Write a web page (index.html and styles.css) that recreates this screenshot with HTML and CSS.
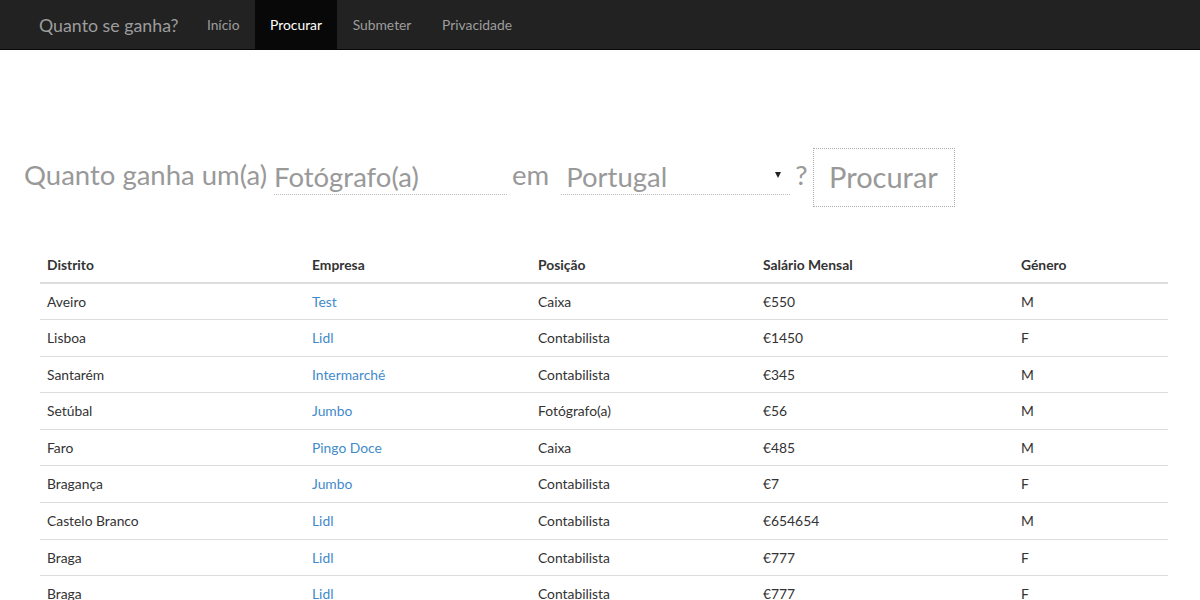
FILE: index.html
```html
<!DOCTYPE html>
<html lang="pt">
<head>
<meta charset="utf-8">
<title>Quanto se ganha?</title>
<link rel="stylesheet" href="styles.css">
</head>
<body>
<nav class="navbar">
  <a class="brand" href="#">Quanto se ganha?</a>
  <ul class="nav">
    <li><a href="#">Início</a></li>
    <li class="active"><a href="#">Procurar</a></li>
    <li><a href="#">Submeter</a></li>
    <li><a href="#">Privacidade</a></li>
  </ul>
</nav>
<main class="page">
  <form class="search">
    <span class="label">Quanto ganha um(a)</span>
    <input class="field job" type="text" placeholder="Fotógrafo(a)">
    <span class="label em">em</span>
    <div class="field select">
      <span>Portugal</span>
      <span class="caret"></span>
    </div>
    <span class="label q">?</span>
    <button class="btn" type="button">Procurar</button>
  </form>
  <table class="results">
    <thead>
      <tr><th class="c1">Distrito</th><th class="c2">Empresa</th><th class="c3">Posição</th><th class="c4">Salário Mensal</th><th class="c5">Género</th></tr>
    </thead>
    <tbody>
      <tr><td>Aveiro</td><td><a href="#">Test</a></td><td>Caixa</td><td>€550</td><td>M</td></tr>
      <tr><td>Lisboa</td><td><a href="#">Lidl</a></td><td>Contabilista</td><td>€1450</td><td>F</td></tr>
      <tr><td>Santarém</td><td><a href="#">Intermarché</a></td><td>Contabilista</td><td>€345</td><td>M</td></tr>
      <tr><td>Setúbal</td><td><a href="#">Jumbo</a></td><td>Fotógrafo(a)</td><td>€56</td><td>M</td></tr>
      <tr><td>Faro</td><td><a href="#">Pingo Doce</a></td><td>Caixa</td><td>€485</td><td>M</td></tr>
      <tr><td>Bragança</td><td><a href="#">Jumbo</a></td><td>Contabilista</td><td>€7</td><td>F</td></tr>
      <tr><td>Castelo Branco</td><td><a href="#">Lidl</a></td><td>Contabilista</td><td>€654654</td><td>M</td></tr>
      <tr><td>Braga</td><td><a href="#">Lidl</a></td><td>Contabilista</td><td>€777</td><td>F</td></tr>
      <tr><td>Braga</td><td><a href="#">Lidl</a></td><td>Contabilista</td><td>€777</td><td>F</td></tr>
    </tbody>
  </table>
</main>
</body>
</html>
```

FILE: styles.css
```css
* { box-sizing: border-box; }
html, body { margin: 0; padding: 0; }
body {
  font-family: Lato, "Open Sans", "Liberation Sans", sans-serif;
  font-size: 13.85px;
  color: #333;
  background: #fff;
  overflow: hidden;
}
a { text-decoration: none; }

.navbar {
  display: flex;
  align-items: stretch;
  height: 50px;
  background: #222;
  border-bottom: 1px solid #080808;
  padding-left: 24px;
}
.brand {
  display: flex;
  align-items: center;
  padding: 0 13px 0 15px;
  font-size: 17.8px;
  color: #9d9d9d;
}
.nav {
  display: flex;
  list-style: none;
  margin: 0;
  padding: 0;
}
.nav li a {
  display: flex;
  align-items: center;
  height: 100%;
  padding: 0 15.3px;
  color: #9d9d9d;
}
.nav li.active a {
  background: #080808;
  color: #fff;
}

.search {
  display: flex;
  align-items: center;
  margin: 98px 0 0 24px;
  height: 59px;
  color: #999;
}
.label {
  font-size: 27.5px;
  font-weight: 400;
  color: #999;
  line-height: 1;
  position: relative;
  top: -3px;
}
.em { margin-left: 5px; margin-right: 12px; }
.q { margin-left: 5px; margin-right: 5px; }
.field {
  font-family: inherit;
  font-size: 27.5px;
  color: #999;
  border: 0;
  border-bottom: 1px dotted #bbb;
  background: transparent;
  height: 34px;
  padding: 0 0 3px 0;
  margin-top: 1px;
  outline: none;
}
.field::placeholder { color: #999; }
.job { width: 233px; margin-left: 7px; }
.select {
  display: flex;
  align-items: center;
  justify-content: space-between;
  width: 229px;
  padding: 0 0 3px 5px;
}
.caret {
  width: 0; height: 0;
  border-left: 3px solid transparent;
  border-right: 3px solid transparent;
  border-top: 6px solid #222;
  margin-right: 9px;
  margin-top: -2px;
}
.btn {
  font-family: inherit;
  font-size: 29px;
  color: #999;
  background: #fff;
  border: 1px dotted #aaa;
  width: 142px;
  height: 59px;
  padding: 0 0 2px 0;
  line-height: 1;
}

.results {
  border-collapse: collapse;
  margin: 40px 0 0 40px;
  width: 1128px;
  table-layout: fixed;
}
.results th, .results td {
  text-align: left;
  padding: 0 7px;
  height: 36.6px;
  vertical-align: middle;
  line-height: 19.8px;
}
.results th {
  font-weight: 700;
  color: #333;
  border-bottom: 2px solid #ddd;
  height: 36px;
}
.results td { border-top: 1px solid #ddd; }
.results tbody tr:first-child td { border-top: 0; }
.results td a { color: #428bca; }
.c1 { width: 265px; }
.c2 { width: 226px; }
.c3 { width: 225px; }
.c4 { width: 258px; }
.c5 { width: 154px; }
```
